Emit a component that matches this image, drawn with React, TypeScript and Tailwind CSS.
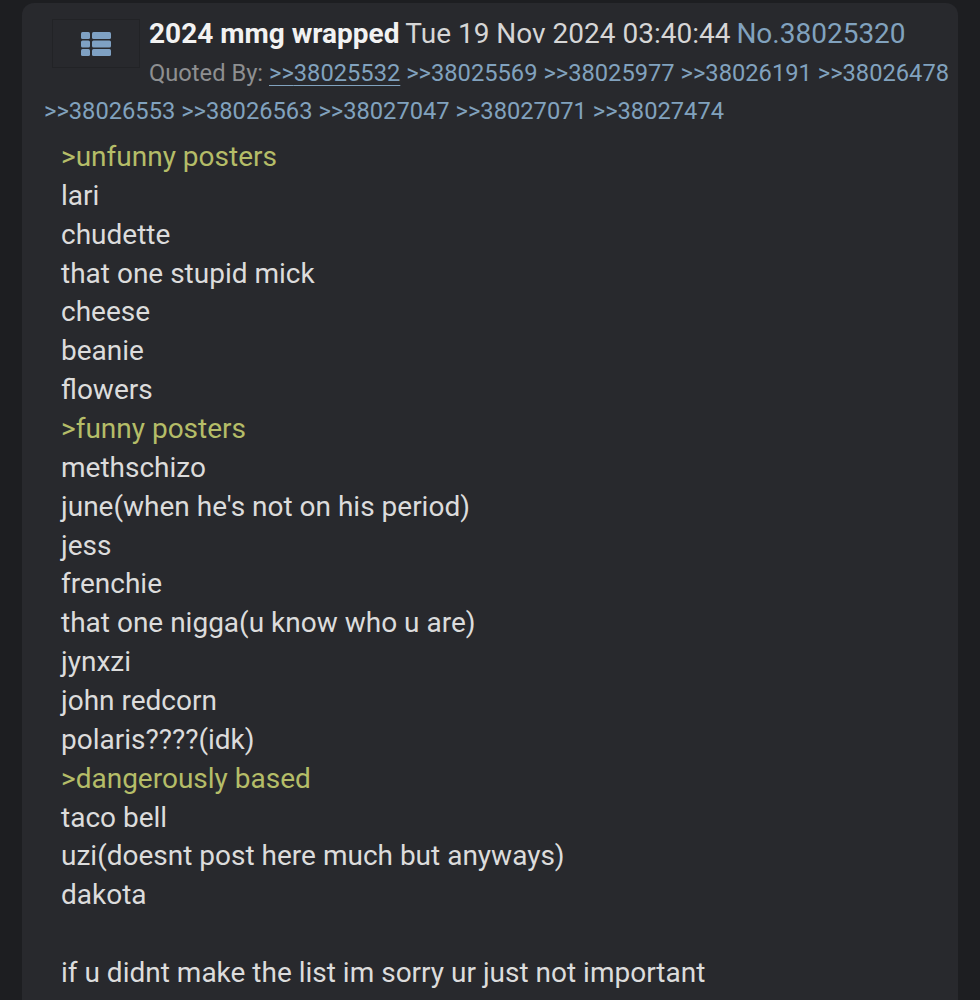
const quotes = [
  "38025532", "38025569", "38025977", "38026191", "38026478",
  "38026553", "38026563", "38027047", "38027071", "38027474",
];

const lines: { text: string; green?: boolean }[] = [
  { text: ">unfunny posters", green: true },
  { text: "lari" },
  { text: "chudette" },
  { text: "that one stupid mick" },
  { text: "cheese" },
  { text: "beanie" },
  { text: "flowers" },
  { text: ">funny posters", green: true },
  { text: "methschizo" },
  { text: "june(when he's not on his period)" },
  { text: "jess" },
  { text: "frenchie" },
  { text: "that one nigga(u know who u are)" },
  { text: "jynxzi" },
  { text: "john redcorn" },
  { text: "polaris????(idk)" },
  { text: ">dangerously based", green: true },
  { text: "taco bell" },
  { text: "uzi(doesnt post here much but anyways)" },
  { text: "dakota" },
  { text: "" },
  { text: "if u didnt make the list im sorry ur just not important" },
];

function ListIcon() {
  return (
    <svg width="30" height="24" viewBox="0 0 30 24" fill="#7fa1c3">
      <rect x="0" y="0" width="9" height="7" rx="1.5" />
      <rect x="11" y="0" width="19" height="7" rx="1.5" />
      <rect x="0" y="8.5" width="9" height="7" rx="1.5" />
      <rect x="11" y="8.5" width="19" height="7" rx="1.5" />
      <rect x="0" y="17" width="9" height="7" rx="1.5" />
      <rect x="11" y="17" width="19" height="7" rx="1.5" />
    </svg>
  );
}

export default function App() {
  return (
    <div
      className="min-h-[1000px] w-[980px] overflow-hidden bg-[#1d1e21] pt-[3px] pl-[22px]"
      style={{ fontFamily: "Roboto, 'Liberation Sans', sans-serif" }}
    >
      <div className="w-[936px] rounded-[12px] bg-[#28292d] pl-[22px] pr-2 pt-[11px] pb-10">
        {/* header */}
        <div className="text-[23.7px] leading-[38px]">
          <div className="float-left ml-[8px] mt-[5px] mr-[9px] flex h-[49px] w-[88px] items-center justify-center border border-[#222326]">
            <ListIcon />
          </div>
          <div className="h-[40px] leading-[40px]">
            <span className="text-[28px] font-bold text-[#f2f2f2]">2024 mmg wrapped</span>{" "}
            <span className="text-[28px] text-[#d6d6d6]">Tue 19 Nov 2024 03:40:44</span>{" "}
            <span className="text-[28px] text-[#81a2be]">No.38025320</span>
          </div>
          <span className="text-[#8e8f91]">Quoted By: </span>
          {quotes.map((q, i) => (
            <span key={q}>
              <span className={i === 0 ? "text-[#81a2be] underline underline-offset-4 decoration-1" : "text-[#81a2be]"}>
                &gt;&gt;{q}
              </span>{" "}
            </span>
          ))}
        </div>

        {/* body */}
        <div className="clear-both ml-[17px] mt-[8px] text-[28px] leading-[38.86px]">
          {lines.map((l, i) => (
            <div key={i} className={l.green ? "h-[38.86px] text-[#b5bd68]" : "h-[38.86px] text-[#dcdcdc]"}>
              {l.text}
            </div>
          ))}
        </div>
      </div>
    </div>
  );
}
